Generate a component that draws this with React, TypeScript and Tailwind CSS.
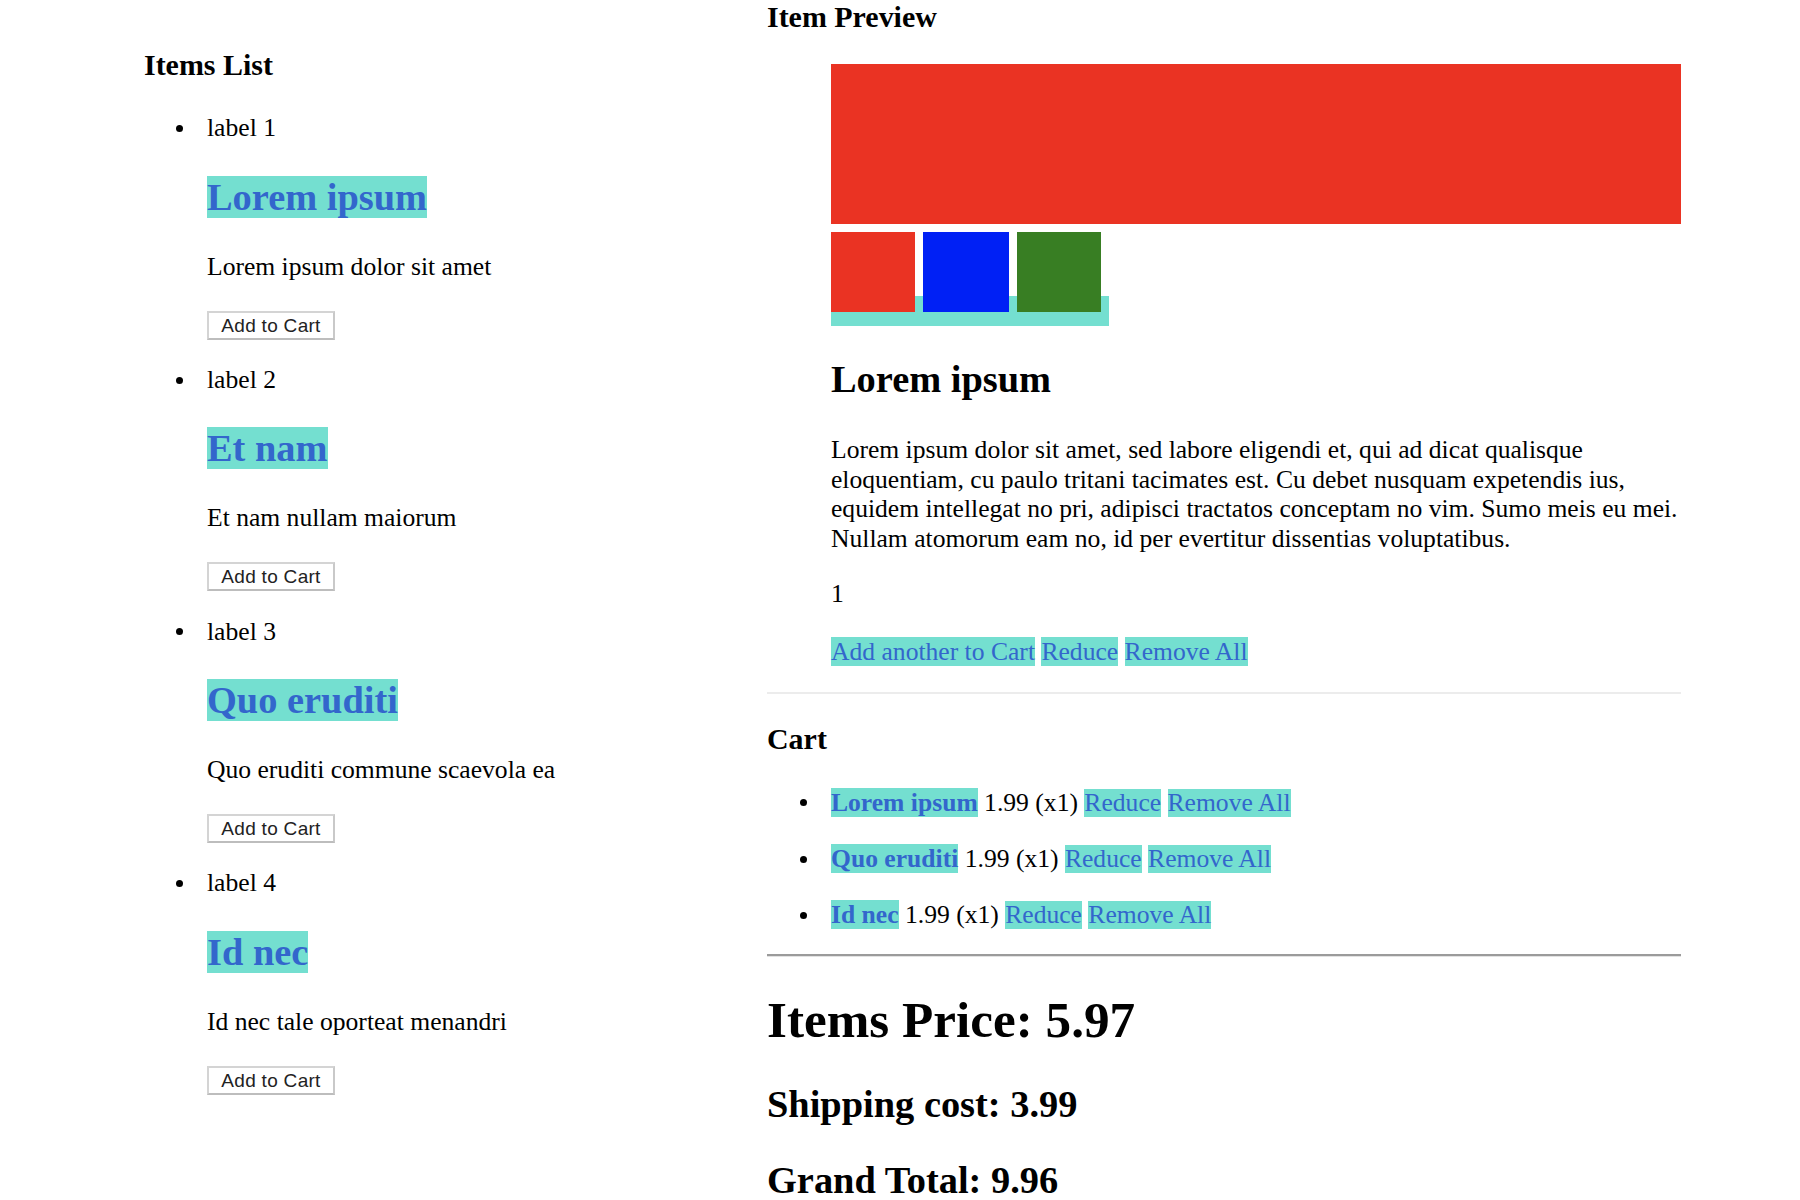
const items = [
    { label: "label 1", title: "Lorem ipsum", desc: "Lorem ipsum dolor sit amet" },
    { label: "label 2", title: "Et nam", desc: "Et nam nullam maiorum" },
    { label: "label 3", title: "Quo eruditi", desc: "Quo eruditi commune scaevola ea" },
    { label: "label 4", title: "Id nec", desc: "Id nec tale oporteat menandri" },
];

const cart = [
    { title: "Lorem ipsum", price: "1.99", qty: 1 },
    { title: "Quo eruditi", price: "1.99", qty: 1 },
    { title: "Id nec", price: "1.99", qty: 1 },
];

const Bullet = () => (
    <span className="inline-block w-[7px] h-[7px] rounded-full bg-black -ml-[31px] mr-[24px] align-middle relative -top-[2px]"></span>
);

const ItemsList = () => {
    return (
        <div className="w-[767px] shrink-0 pl-[144px] pt-[48px]">
            <h3 className="text-[29.95px] leading-[34.4px] font-bold">Items List</h3>
            <ul className="pl-[63px] mt-[31px]">
                {items.map((item) => (
                    <li key={item.label}>
                        <div>
                            <Bullet />
                            {item.label}
                        </div>
                        <h2 className="text-[38.4px] leading-[44px] font-bold mt-[32px]">
                            <a className="bg-[#74dfd0] text-[#3366cc] cursor-pointer">{item.title}</a>
                        </h2>
                        <p className="mt-[33px]">{item.desc}</p>
                        <div className="mt-[27.5px] mb-[27.3px] h-[29px]">
                            <button className="w-[128px] h-[29px] bg-white border-2 border-[#d4d4d4] border-b-[#bdbdbd] border-r-[#c9c9c9] font-['Liberation_Sans',sans-serif] text-[19px] leading-[25px] tracking-[0.3px] text-[#222]">
                                Add to Cart
                            </button>
                        </div>
                    </li>
                ))}
            </ul>
        </div>
    );
};

const Preview = () => {
    return (
        <div className="pl-[64px]">
            <div className="mt-[30px] h-[160px] w-[850px] bg-[#ea3323]"></div>
            <div className="mt-[8px] w-[278px] h-[94px] flex gap-[8px] bg-[linear-gradient(to_bottom,transparent_64px,#74dfd0_64px)]">
                <button className="w-[84px] h-[80px] bg-[#ea3323]"></button>
                <button className="w-[86px] h-[80px] bg-[#0020f5]"></button>
                <button className="w-[84px] h-[80px] bg-[#387e23]"></button>
            </div>
            <h2 className="text-[38.4px] leading-[44px] font-bold mt-[31px]">Lorem ipsum</h2>
            <p className="mt-[34px] w-[850px]">
                Lorem ipsum dolor sit amet, sed labore eligendi et, qui ad dicat qualisque eloquentiam, cu paulo
                tritani tacimates est. Cu debet nusquam expetendis ius, equidem intellegat no pri, adipisci
                tractatos conceptam no vim. Sumo meis eu mei. Nullam atomorum eam no, id per evertitur dissentias
                voluptatibus.
            </p>
            <p className="mt-[25.6px]">1</p>
            <div className="mt-[29px] h-[29.4px]">
                <button className="bg-[#74dfd0] text-[#3366cc] leading-[29.4px]">Add another to Cart</button>{" "}
                <button className="bg-[#74dfd0] text-[#3366cc] leading-[29.4px]">Reduce</button>{" "}
                <button className="bg-[#74dfd0] text-[#3366cc] leading-[29.4px]">Remove All</button>
            </div>
        </div>
    );
};

const Cart = () => {
    const total = cart.reduce((s, c) => s + parseFloat(c.price) * c.qty, 0);
    const shipping = 3.99;
    return (
        <>
            <h3 className="text-[29.95px] leading-[34.4px] font-bold mt-[28px]">Cart</h3>
            <ul className="pl-[64px] mt-[31px]">
                {cart.map((c) => (
                    <li key={c.title} className="mb-[26.8px] last:mb-0">
                        <Bullet />
                        <a className="bg-[#74dfd0] text-[#3366cc] font-bold cursor-pointer">{c.title}</a> {c.price} (x{c.qty}){" "}
                        <button className="bg-[#74dfd0] text-[#3366cc] leading-[28px]">Reduce</button>{" "}
                        <button className="bg-[#74dfd0] text-[#3366cc] leading-[28px]">Remove All</button>
                    </li>
                ))}
            </ul>
            <div className="mt-[24px] h-[3px] border-t-2 border-[#9b9b9b] border-b border-b-[#e2e2e2]"></div>
            <h1 className="text-[51.2px] leading-[58.8px] font-bold mt-[34px]">Items Price: {total.toFixed(2)}</h1>
            <h2 className="text-[38.4px] leading-[44px] font-bold mt-[33px]">Shipping cost: {shipping.toFixed(2)}</h2>
            <h2 className="text-[38.4px] leading-[44px] font-bold mt-[32px]">
                Grand Total: {(total + shipping).toFixed(2)}
            </h2>
        </>
    );
};

export default function App() {
    return (
        <div className="flex bg-white text-black font-['Liberation_Serif',serif] text-[25.6px] leading-[29.4px] min-h-[1200px]">
            <ItemsList />
            <div className="w-[914px] shrink-0">
                <h3 className="text-[29.95px] leading-[34.4px] font-bold">Item Preview</h3>
                <Preview />
                <div className="mt-[26px] h-[2px] bg-[#ececec]"></div>
                <Cart />
            </div>
        </div>
    );
}
